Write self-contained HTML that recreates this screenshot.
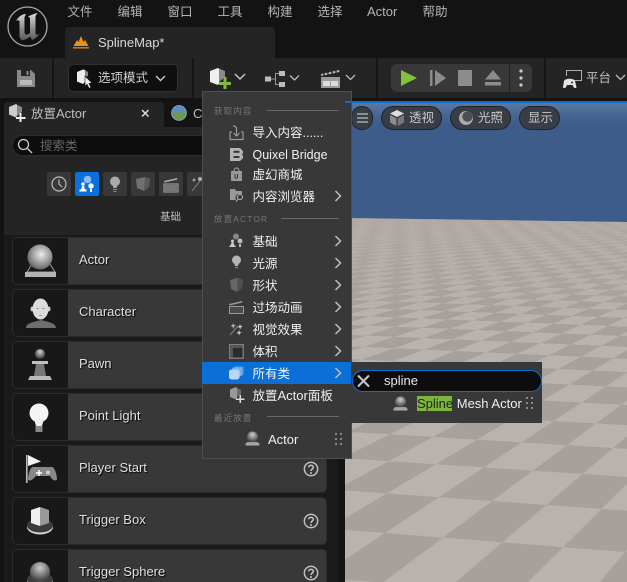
<!DOCTYPE html>
<html><head><meta charset="utf-8">
<style>
*{margin:0;padding:0;box-sizing:border-box}
html,body{width:627px;height:582px;overflow:hidden;background:#131313}
body{position:relative;font-family:"Liberation Sans","Noto Sans CJK SC",sans-serif;color:#ddd}
.a{position:absolute}
.t{position:absolute;white-space:nowrap;line-height:18px;height:18px}
svg{position:absolute;overflow:visible}
.mn{font-size:12.5px;color:#b4b4b4;top:3px}
.sep{position:absolute;top:58px;height:40px;width:2px;background:#171717}
.cat{position:absolute;top:172px;width:24px;height:24px;background:#383838;border-radius:2px}
.item{position:absolute;left:12px;width:315px;height:48px;background:#383838;border:1px solid #2b2b2b;border-radius:5px;overflow:hidden}
.item i{position:absolute;left:0;top:0;bottom:0;width:55px;background:#181818}
.lbl{position:absolute;left:79px;font-size:13px;color:#e0e0e0;text-shadow:1px 1px 1px #000;white-space:nowrap;line-height:18px}
.mi{position:absolute;left:252.5px;font-size:12.5px;color:#f0f0f0;white-space:nowrap;line-height:18px}
.l{font-size:13px}
.h{position:absolute;left:214px;font-size:8.5px;color:#767676;letter-spacing:1.1px;white-space:nowrap;line-height:12px}
.hl{position:absolute;height:1px;background:#6a6a6a;right:288px}
.pill{position:absolute;top:106px;height:24px;border-radius:12px;background:#383d46;border:1px solid #20242c;color:#c8c8c8;font-size:12.5px;line-height:22px}
</style></head>
<body>
<!-- viewport -->
<div class="a" style="left:345px;top:101px;width:282px;height:481px;overflow:hidden;background:#3d5c89">
  <div class="a" style="left:0;top:0;width:282px;height:1.5px;background:#0f6bc8;z-index:3"></div>
  <div class="a" style="left:0;top:1px;width:282px;height:24px;background:linear-gradient(#5b7aa6,#456491 60%,#3d5c89);z-index:0"></div>
  <div class="a" style="left:-345px;top:-101px;width:627px;height:582px;clip-path:polygon(345px 218px,627px 222px,627px 582px,345px 582px);overflow:hidden">
    <div class="a" style="left:-6000px;top:-4500px;width:8000px;height:5400px;transform-origin:6000px 4500px;transform:matrix3d(.4017,-.0078,0,-.0000788,-.7466,-.1161,0,-.0007755,0,0,1,0,433,437,0,1);background:repeating-conic-gradient(#b8b3ae 0 25%,#a8a09c 0 50%) 0 0/200px 200px"></div>
    <div class="a" style="left:345px;top:218px;width:282px;height:100px;background:linear-gradient(rgba(178,170,165,.75),rgba(178,170,165,.4) 40%,rgba(178,170,165,0))"></div>
  </div>
</div>
<!-- viewport pills -->
<div class="pill" style="left:351px;width:22px"></div>
<svg style="left:351px;top:106px" width="22" height="24"><path d="M6 8h11M6 12h11M6 16h11" stroke="#ddd" stroke-width="1.100" fill="none"/></svg>
<div class="pill" style="left:381px;width:61px;padding-left:27px">透视</div>
<svg style="left:388px;top:109px" width="18" height="18"><path d="M9 1l7 3.500-7 3.500-7-3.500z" fill="#ddd"/><path d="M2 6l6.300 3.200V17L2 13.500z" fill="#8c8c8c"/><path d="M16 6l-6.300 3.200V17l6.300-3.500z" fill="#777"/></svg>
<div class="pill" style="left:450px;width:61px;padding-left:27px">光照</div>
<svg style="left:458px;top:110px" width="16" height="16"><circle cx="8" cy="8" r="7" fill="#aaa"/><circle cx="9.500" cy="6.500" r="5.200" fill="#4a4e55"/></svg>
<div class="pill" style="left:519px;width:41px;padding-left:8px">显示</div>

<!-- title bar -->
<div class="a" style="left:0;top:0;width:627px;height:58px;background:#131313"></div>
<svg style="left:7px;top:6px" width="41" height="41" viewBox="0 0 41 41"><defs><linearGradient id="lg" x1="0" y1="0" x2="0" y2="1"><stop offset="0" stop-color="#dcdcdc"/><stop offset=".55" stop-color="#909090"/><stop offset="1" stop-color="#5a5a5a"/></linearGradient></defs><circle cx="20.500" cy="20.500" r="19.500" fill="#111" stroke="#a8a8a8" stroke-width="1.300"/><path d="M9 15C11 11 15 8 19 8L17.500 11V26C17.500 29 20 29.500 23 27V12L21 10.500C24 9 28 7.500 30.500 7L28.500 10V27C28.500 29 30 29.500 33 27.500C30 31 27 33.500 25 34L23 30.500C20 33 17 34.500 15 34C13 33.500 12.500 31 12.500 28V15C11 14 10 14 9 15Z" fill="url(#lg)"/></svg>
<div class="t mn" style="left:67.500px">文件</div>
<div class="t mn" style="left:117.500px">编辑</div>
<div class="t mn" style="left:167.500px">窗口</div>
<div class="t mn" style="left:217.500px">工具</div>
<div class="t mn" style="left:267.500px">构建</div>
<div class="t mn" style="left:317.500px">选择</div>
<div class="t mn" style="left:367px;font-size:13px">Actor</div>
<div class="t mn" style="left:422.500px">帮助</div>
<!-- doc tab -->
<div class="a" style="left:65px;top:27px;width:210px;height:31px;background:#242424;border-radius:4px 4px 0 0"></div>
<svg style="left:72px;top:35px" width="18" height="15"><path d="M1.500 11L5 5l1.500 2L9 1l2.500 6L13 5l3.500 6z" fill="#e8921c"/><rect x="1" y="12" width="16" height="1.600" fill="#b97a22"/></svg>
<div class="t" style="left:98px;top:34px;font-size:13px;color:#d8d8d8">SplineMap*</div>
<!-- toolbar -->
<div class="a" style="left:0;top:58px;width:627px;height:40px;background:#242424"></div>
<div class="sep" style="left:52px"></div><div class="sep" style="left:192px"></div><div class="sep" style="left:376px"></div><div class="sep" style="left:544px"></div>
<svg style="left:17px;top:69px" width="18" height="18"><path d="M0 1h14l4 4v13H0z" fill="#8a8a8a"/><rect x="4" y="1" width="9" height="6" fill="#242424"/><rect x="9.500" y="2" width="2" height="4" fill="#8a8a8a"/><rect x="3" y="11" width="12" height="5" fill="#bbb"/></svg>
<div class="a" style="left:68px;top:64px;width:110px;height:28px;background:#0f0f0f;border:1px solid #303030;border-radius:5px"></div>
<svg style="left:76px;top:69px" width="18" height="19"><path d="M1 3l6-2.500 2 .5v12l-2 2-6-2.500z" fill="#eee"/><path d="M9 1l3 2v4l-3 1z" fill="#888"/><path d="M9 7l7 7-3 .5 2 4-2 .8-2-4-2 2z" fill="#eee" stroke="#111" stroke-width=".6"/></svg>
<div class="t" style="left:98px;top:69px;font-size:12.500px;color:#d0d0d0">选项模式</div>
<svg style="left:154px;top:72px" width="12" height="12"><path d="M2 4l4.500 4.500L11 4" stroke="#ccc" stroke-width="1.400" fill="none"/></svg>
<svg style="left:209px;top:67px" width="24" height="22"><path d="M1 4l8-3 1 .5v15l-1 1.500-8-3z" fill="#f0f0f0"/><path d="M10 1.500L16 4v6l-6 5z" fill="#8a8a8a"/><path d="M14.500 10h3v5h4.500v3h-4.500v4h-3v-4H10v-3h4.500z" fill="#82b83e"/></svg>
<svg style="left:233px;top:71px" width="14" height="12"><path d="M2 3l5 5 5-5" stroke="#ccc" stroke-width="1.400" fill="none"/></svg>
<svg style="left:265px;top:71px" width="36" height="18"><rect x="0" y="5.500" width="6" height="5" fill="#bcbcbc"/><rect x="14" y="0" width="6" height="5" fill="#bcbcbc"/><rect x="14" y="11" width="6" height="5" fill="#bcbcbc"/><path d="M6 8h4M14 2.500h-3.500v11H14" stroke="#999" fill="none"/><path d="M25 4.500l4.500 4.500L34 4.500" stroke="#bbb" stroke-width="1.300" fill="none"/></svg>
<svg style="left:320px;top:68px" width="24" height="20"><path d="M1 6l18-4 .5 2-18 4z" fill="#bbb"/><path d="M4 5.500v2M8 4.500v2M12 3.500v2M16 2.700v2" stroke="#242424" stroke-width="1.500"/><rect x="1" y="9" width="19" height="11" fill="#9c9c9c"/><rect x="3" y="13" width="7" height="5" fill="#dcdcdc"/><rect x="11" y="13" width="7" height="5" fill="#dcdcdc"/></svg>
<svg style="left:344px;top:72px" width="13" height="12"><path d="M2 3l4.500 4.500L11 3" stroke="#bbb" stroke-width="1.300" fill="none"/></svg>
<!-- play group -->
<div class="a" style="left:391px;top:64px;width:141px;height:28px;background:#383838;border-radius:6px"></div>
<div class="a" style="left:509px;top:64px;width:1px;height:28px;background:#222"></div>
<svg style="left:400px;top:69px" width="18" height="18"><path d="M1 1l16 8-16 8z" fill="#82c13c"/></svg>
<svg style="left:430px;top:70px" width="17" height="16"><rect x="0" y="0" width="2.500" height="16" fill="#8c8c8c"/><path d="M5 0l11 8-11 8z" fill="#8c8c8c"/></svg>
<div class="a" style="left:458px;top:70px;width:14px;height:16px;background:#8c8c8c"></div>
<svg style="left:485px;top:70px" width="16" height="16"><path d="M8 0l8 9.500H0z" fill="#8c8c8c"/><rect x="0" y="12" width="16" height="3.500" fill="#8c8c8c"/></svg>
<svg style="left:519px;top:68px" width="4" height="20"><circle cx="2" cy="3" r="1.600" fill="#ccc"/><circle cx="2" cy="10" r="1.600" fill="#ccc"/><circle cx="2" cy="17" r="1.600" fill="#ccc"/></svg>
<svg style="left:562px;top:68px" width="22" height="21"><path d="M4 2h16v11H11v-1h8V3H5v5H4z" fill="#b0b0b0"/><path d="M2 13c1-3 10-3 11 0l1.500 6c0 1.500-2 1.500-3 0l-1-2H5l-1 2c-1 1.500-3 1.500-3 0z" fill="#e4e4e4"/><circle cx="10" cy="14.500" r="1" fill="#333"/></svg>
<div class="t" style="left:586px;top:69px;font-size:12.500px;color:#c4c4c4">平台</div>
<svg style="left:614px;top:72px" width="13" height="12"><path d="M2 3l4.500 4.500L11 3" stroke="#bbb" stroke-width="1.300" fill="none"/></svg>

<!-- left panel -->
<div class="a" style="left:0;top:98px;width:345px;height:484px;background:#131313"></div>
<div class="a" style="left:4px;top:127px;width:334px;height:108px;background:#242424"></div>
<div class="a" style="left:4px;top:235px;width:334px;height:347px;background:#1a1a1a"></div>
<div class="a" style="left:4px;top:102px;width:160px;height:26px;background:#242424;border-radius:4px 4px 0 0"></div>
<svg style="left:8px;top:104px" width="18" height="18"><path d="M1 3l7-3 1 .5v11l-1 2-7-3z" fill="#ccc"/><path d="M9 1l5 2v5l-5 4z" fill="#888"/><path d="M11.500 9h2v4h4v2h-4v3h-2v-3H8v-2h3.500z" fill="#eee"/></svg>
<div class="t" style="left:31px;top:105px;font-size:12.500px;color:#bdbdbd">放置<span class="l">Actor</span></div>
<svg style="left:141px;top:109px" width="9" height="9"><path d="M1 1l6.500 6.500M7.500 1L1 7.500" stroke="#ddd" stroke-width="1.500"/></svg>
<svg style="left:171px;top:105px" width="16" height="16"><circle cx="8" cy="8" r="7.500" fill="#5b8fc0"/><path d="M1 10l4-4 3 3 3-3 4 4c-1 4-4 5.500-7 5.500S2 14 1 10z" fill="#6f9a4e"/><circle cx="8" cy="8" r="7.500" fill="none" stroke="#9ab" stroke-width=".7"/></svg>
<div class="t" style="left:193px;top:105px;font-size:13px;color:#bdbdbd">C</div>
<div class="a" style="left:12px;top:135px;width:200px;height:21px;background:#0d0d0d;border:1px solid #2e2e2e;border-radius:11px"></div>
<svg style="left:17px;top:138px" width="16" height="16"><circle cx="6.500" cy="6.500" r="5" stroke="#ccc" stroke-width="1.300" fill="none"/><path d="M10.500 10.500L15 15" stroke="#ccc" stroke-width="1.300"/></svg>
<div class="t" style="left:40px;top:137px;font-size:12.500px;color:#666">搜索类</div>
<div class="cat" style="left:47px"></div>
<svg style="left:51px;top:176px" width="16" height="16"><circle cx="8" cy="8" r="7" stroke="#bbb" stroke-width="1.200" fill="none"/><path d="M8 3.500V8l3 3" stroke="#bbb" stroke-width="1.200" fill="none"/></svg>
<div class="cat" style="left:75px;background:#0a70e0"></div>
<svg style="left:78px;top:175px" width="18" height="18"><circle cx="9.500" cy="4.500" r="3.800" fill="#8ebcf0"/><circle cx="5" cy="9" r="1.800" fill="#fff"/><path d="M3 14.500h4L6 11H4z" fill="#fff"/><rect x="1.500" y="14.500" width="7" height="2" fill="#fff"/><circle cx="13" cy="11" r="2.700" fill="#fff"/><rect x="12" y="14" width="2" height="3" fill="#fff"/></svg>
<div class="cat" style="left:103px"></div>
<svg style="left:108px;top:176px" width="14" height="17"><circle cx="7" cy="5.500" r="5" fill="#aaa"/><path d="M4.500 9h5l-1 3h-3z" fill="#aaa"/><rect x="5" y="13" width="4" height="1" fill="#888"/><rect x="5.500" y="15" width="3" height="1" fill="#888"/></svg>
<div class="cat" style="left:131px"></div>
<svg style="left:135px;top:176px" width="16" height="16"><path d="M1 3l9-2 5 2-1 8-5 4-7-3z" fill="#707070"/><path d="M10 1l5 2-1 8-5 4z" fill="#5a5a5a"/></svg>
<div class="cat" style="left:159px"></div>
<svg style="left:163px;top:176px" width="16" height="16"><path d="M1 5l13-3 .5 1.500-13 3z" fill="#aaa"/><rect x="1" y="8" width="14" height="8" fill="none" stroke="#aaa" stroke-width="1"/><rect x="2" y="9" width="12" height="6" fill="#777"/></svg>
<div class="cat" style="left:187px"></div>
<svg style="left:191px;top:176px" width="12" height="16"><path d="M1 15L9 5" stroke="#888" stroke-width="1"/><circle cx="3" cy="4" r="1.500" fill="#999"/><circle cx="9" cy="3" r="2" fill="#aaa"/></svg>
<div class="t" style="left:160px;top:208px;font-size:10.500px;color:#bdbdbd">基础</div>

<!-- list items -->
<div class="item" style="top:237px"><i></i></div>
<div class="item" style="top:289px"><i></i></div>
<div class="item" style="top:341px"><i></i></div>
<div class="item" style="top:393px"><i></i></div>
<div class="item" style="top:445px"><i></i></div>
<div class="item" style="top:497px"><i></i></div>
<div class="item" style="top:549px;height:33px;border-bottom:0;border-radius:5px 5px 0 0"><i></i></div>
<div class="lbl" style="top:251px">Actor</div>
<div class="lbl" style="top:303px">Character</div>
<div class="lbl" style="top:355px">Pawn</div>
<div class="lbl" style="top:407px">Point Light</div>
<div class="lbl" style="top:459px">Player Start</div>
<div class="lbl" style="top:511px">Trigger Box</div>
<div class="lbl" style="top:563px">Trigger Sphere</div>
<svg style="left:24px;top:243px" width="34" height="36"><defs><radialGradient id="sp" cx=".55" cy=".4" r=".6"><stop offset="0" stop-color="#ededed"/><stop offset="1" stop-color="#666"/></radialGradient><radialGradient id="sp2" cx=".5" cy=".3" r=".6"><stop offset="0" stop-color="#cfcfcf"/><stop offset="1" stop-color="#4a4a4a"/></radialGradient></defs><path d="M3 29l5-8h18l5 8z" fill="none" stroke="#999" stroke-width="1"/><circle cx="16" cy="14" r="12.500" fill="url(#sp)"/><rect x="1" y="29" width="31" height="5" fill="#b4b4b4"/></svg>
<svg style="left:24px;top:297px" width="34" height="34"><path d="M2 31c0-5 8-6 15-8 7 2 15 3 15 8z" fill="#6e6e6e"/><ellipse cx="8" cy="12" rx="1.500" ry="2.500" fill="#ccc"/><ellipse cx="25" cy="12" rx="1.500" ry="2.500" fill="#ccc"/><ellipse cx="16.500" cy="12" rx="8" ry="10.500" fill="#dcdcdc"/><path d="M12 11.500h3M18 11.500h3M15 18.500h3" stroke="#a0a0a0"/></svg>
<svg style="left:27px;top:348px" width="26" height="32"><circle cx="13" cy="6" r="5" fill="url(#sp2)"/><rect x="5" y="13" width="16" height="3" fill="#c0c0c0"/><path d="M9 16h8l2 12H7z" fill="#777"/><path d="M3 28h20l2 4H1z" fill="#bbb"/></svg>
<svg style="left:27px;top:402px" width="24" height="34"><circle cx="12" cy="11" r="9.500" fill="#f4f4f4"/><path d="M7 17h10l-2 7H9z" fill="#eee"/><rect x="8.500" y="24" width="7" height="6" fill="#888"/></svg>
<svg style="left:24px;top:454px" width="34" height="30"><rect x="2" y="1" width="1.600" height="28" fill="#bbb"/><path d="M4 1l13 6.500L4 12z" fill="#f2f2f2"/><path d="M9 13h19c3 0 5 9 5 12 0 2-3 2-5 0l-2-3H12l-3 3c-2 2-5 2-5 0 0-4 2-12 5-12z" fill="#888"/><path d="M12 19h6M15 16v6" stroke="#fff" stroke-width="1.500"/><circle cx="24" cy="18.500" r="2" fill="#ccc"/></svg>
<svg style="left:26px;top:506px" width="30" height="30"><ellipse cx="14" cy="21" rx="13" ry="7.500" fill="#ddd"/><ellipse cx="14" cy="19.500" rx="13" ry="7" fill="#3c3c3c"/><path d="M14 1l-9 3v13l9 3z" fill="#f0f0f0"/><path d="M14 1l9 3v13l-9 3z" fill="#999"/></svg>
<svg style="left:25px;top:560px;overflow:hidden" width="30" height="22"><ellipse cx="15" cy="21" rx="13" ry="7.500" fill="#ddd"/><ellipse cx="15" cy="19.500" rx="13" ry="7" fill="#3c3c3c"/><circle cx="15" cy="12" r="10" fill="url(#sp2)"/></svg>
<svg style="left:303px;top:461px" width="16" height="16"><circle cx="8" cy="8" r="6.700" fill="none" stroke="#c4c4c4" stroke-width="1.400"/><path d="M5.700 6.300C5.700 3.700 10.300 3.700 10.300 6.300 10.300 8 8 8 8 10" fill="none" stroke="#c4c4c4" stroke-width="1.500"/><circle cx="8" cy="12" r="1" fill="#c4c4c4"/></svg>
<svg style="left:303px;top:513px" width="16" height="16"><circle cx="8" cy="8" r="6.700" fill="none" stroke="#c4c4c4" stroke-width="1.400"/><path d="M5.700 6.300C5.700 3.700 10.300 3.700 10.300 6.300 10.300 8 8 8 8 10" fill="none" stroke="#c4c4c4" stroke-width="1.500"/><circle cx="8" cy="12" r="1" fill="#c4c4c4"/></svg>
<svg style="left:303px;top:565px" width="16" height="16"><circle cx="8" cy="8" r="6.700" fill="none" stroke="#c4c4c4" stroke-width="1.400"/><path d="M5.700 6.300C5.700 3.700 10.300 3.700 10.300 6.300 10.300 8 8 8 8 10" fill="none" stroke="#c4c4c4" stroke-width="1.500"/><circle cx="8" cy="12" r="1" fill="#c4c4c4"/></svg>

<!-- dropdown menu -->
<div class="a" style="left:202px;top:91px;width:150px;height:368px;background:#383838;border:1px solid #4e4e4e"></div>
<div class="a" style="left:202px;top:362px;width:150px;height:22px;background:#0a70d8"></div>
<div class="h" style="top:105px">获取内容</div><div class="hl" style="left:267px;top:110px"></div>
<div class="h" style="top:213px">放置ACTOR</div><div class="hl" style="left:281px;top:218px"></div>
<div class="h" style="top:412px">最近放置</div><div class="hl" style="left:267px;top:416px"></div>
<div class="mi" style="top:124px">导入内容......</div>
<div class="mi" style="top:146px">Quixel Bridge</div>
<div class="mi" style="top:166px">虚幻商城</div>
<div class="mi" style="top:188px">内容浏览器</div>
<div class="mi" style="top:233px">基础</div>
<div class="mi" style="top:255px">光源</div>
<div class="mi" style="top:277px">形状</div>
<div class="mi" style="top:299px">过场动画</div>
<div class="mi" style="top:321px">视觉效果</div>
<div class="mi" style="top:343px">体积</div>
<div class="mi" style="top:365px">所有类</div>
<div class="mi" style="top:387px">放置<span class="l">Actor</span>面板</div>
<div class="mi" style="top:431px;left:268px;font-size:13px">Actor</div>
<svg style="left:333px;top:189px" width="10" height="200" fill="none" stroke="#bdbdbd" stroke-width="1.500"><path d="M2.500 2l5 5-5 5M2.500 47l5 5-5 5M2.500 69l5 5-5 5M2.500 91l5 5-5 5M2.500 113l5 5-5 5M2.500 135l5 5-5 5M2.500 157l5 5-5 5M2.500 179l5 5-5 5"/></svg>
<!-- menu icons -->
<svg style="left:229px;top:125px" width="15" height="16" fill="none" stroke="#999" stroke-width="1.200"><path d="M3 7H1v7.500h13V7h-2"/><path d="M7.500 3v8M4.500 8l3 3 3-3M4 1c2 0 3.500 1 3.500 3"/></svg>
<svg style="left:230px;top:148px" width="13" height="13"><path d="M0 0h10l3 3v2.500l-1.500 1L13 7.500V10l-3 3H0z" fill="#b4b4b4"/><rect x="3.500" y="2.800" width="6" height="2" fill="#383838"/><rect x="3.500" y="8" width="6" height="2" fill="#383838"/></svg>
<svg style="left:230px;top:167px" width="13" height="14"><path d="M1 4h11v10H1z" fill="#999"/><path d="M4 4c0-4 5-4 5 0" fill="none" stroke="#999" stroke-width="1.200"/><path d="M5 7v3.500c0 1 2 1 2.500 0V7M7.500 7v4" stroke="#333" fill="none" stroke-width="1"/></svg>
<svg style="left:230px;top:189px" width="14" height="13"><path d="M0 0h5l1 2h6v3H8c-2 1-3 3-2 6H0z" fill="#999"/><circle cx="10" cy="8" r="2.500" fill="none" stroke="#bbb" stroke-width="1"/><path d="M8 10l-2 2.500" stroke="#bbb"/></svg>
<svg style="left:229px;top:233px" width="15" height="15"><circle cx="7" cy="3.500" r="3" fill="#888"/><circle cx="3.500" cy="8" r="1.500" fill="#ccc"/><path d="M2.500 9.500h2l1 3h-4z" fill="#ccc"/><rect x="0.500" y="12.500" width="6" height="1.500" fill="#ccc"/><circle cx="11" cy="8" r="2.500" fill="#bbb"/><rect x="10" y="11" width="2" height="3" fill="#bbb"/></svg>
<svg style="left:231px;top:255px" width="11" height="15"><circle cx="5.500" cy="5" r="4.500" fill="#b4b4b4"/><path d="M3 8h5l-1 3H4z" fill="#b4b4b4"/><rect x="4" y="12" width="3" height="1.200" fill="#888"/></svg>
<svg style="left:229px;top:278px" width="15" height="14"><path d="M1 2l8-2 5 2-1 8-5 4-6-3z" fill="#666"/><path d="M9 0l5 2-1 8-5 4z" fill="#4e4e4e"/></svg>
<svg style="left:229px;top:300px" width="15" height="14"><path d="M0 4l13-3 .5 1.500L.5 5.500z" fill="#999"/><rect x="0.500" y="6.500" width="14" height="7" fill="#4a4a4a" stroke="#999"/></svg>
<svg style="left:229px;top:322px" width="15" height="14"><path d="M1 13l8-9" stroke="#888"/><path d="M4 1l.8 2L7 3.500 5 4.500 4.500 7 3.500 4.500 1.500 4l2-1z" fill="#bbb"/><path d="M11 2l.8 2 2 .5-2 1-.5 2-1-2-2-.5 2-1z" fill="#ccc"/><path d="M10 8l.8 2 2 .5-2 1-.5 2-1-2-2-.5 2-1z" fill="#ccc"/></svg>
<svg style="left:229px;top:344px" width="15" height="15"><rect x=".7" y=".7" width="13.600" height="13.600" fill="none" stroke="#888" stroke-width="1.200"/><rect x="3" y="3" width="11" height="11" fill="#2c2c2c" stroke="#777"/></svg>
<svg style="left:229px;top:366px" width="15" height="14"><rect x="5" y="0.500" width="9.500" height="9" rx="2" fill="#5aa0ea"/><rect x="3" y="1.500" width="9.500" height="9" rx="2" fill="#78b2ef"/><rect x="0" y="3.500" width="10.500" height="10" rx="2.500" fill="#b6d7f8"/></svg>
<svg style="left:229px;top:387px" width="16" height="16"><path d="M1 2.500l6-2.500 1 .5v10l-1 2-6-2.500z" fill="#999"/><path d="M8 1l4 2v4l-4 3z" fill="#6e6e6e"/><path d="M10.500 8h1.500v3.500h3.500V13H12v3h-1.500v-3H7v-1.500h3.500z" fill="#ddd"/></svg>
<svg style="left:245px;top:431px" width="15" height="15"><circle cx="7.500" cy="6" r="5.500" fill="url(#sp2)"/><path d="M2 11h11l1 1.500H1z" fill="#999"/><rect x="0.500" y="12.500" width="14" height="2" fill="#aaa"/></svg>
<svg style="left:335px;top:433px" width="7" height="12" fill="#888"><rect x="0" y="0" width="2" height="2"/><rect x="5" y="0" width="2" height="2"/><rect x="0" y="5" width="2" height="2"/><rect x="5" y="5" width="2" height="2"/><rect x="0" y="10" width="2" height="2"/><rect x="5" y="10" width="2" height="2"/></svg>

<!-- submenu -->
<div class="a" style="left:351px;top:362px;width:191px;height:61px;background:#383838"></div>
<div class="a" style="left:352px;top:370px;width:190px;height:22px;background:#0d0d0d;border:1.200px solid #0a70d8;border-radius:11px"></div>
<svg style="left:357px;top:375px" width="13" height="12"><path d="M1 .5l11 11M12 .5L1 11.500" stroke="#c8c8c8" stroke-width="2"/></svg>
<div class="t" style="left:384px;top:372px;font-size:13px;color:#e8e8e8">spline</div>
<svg style="left:393px;top:396px" width="15" height="15"><circle cx="7.500" cy="6" r="5.500" fill="url(#sp2)"/><path d="M2 11h11l1 1.500H1z" fill="#999"/><rect x="0.500" y="12.500" width="14" height="2" fill="#aaa"/></svg>
<div class="a" style="left:417px;top:396px;width:35px;height:15px;background:#7eb53c"></div>
<div class="t" style="left:417px;top:395px;font-size:13px;color:#f0f0f0"><span style="color:#222">Spline</span> Mesh Actor</div>
<svg style="left:526px;top:397px" width="7" height="12" fill="#888"><rect x="0" y="0" width="2" height="2"/><rect x="5" y="0" width="2" height="2"/><rect x="0" y="5" width="2" height="2"/><rect x="5" y="5" width="2" height="2"/><rect x="0" y="10" width="2" height="2"/><rect x="5" y="10" width="2" height="2"/></svg>
</body></html>
